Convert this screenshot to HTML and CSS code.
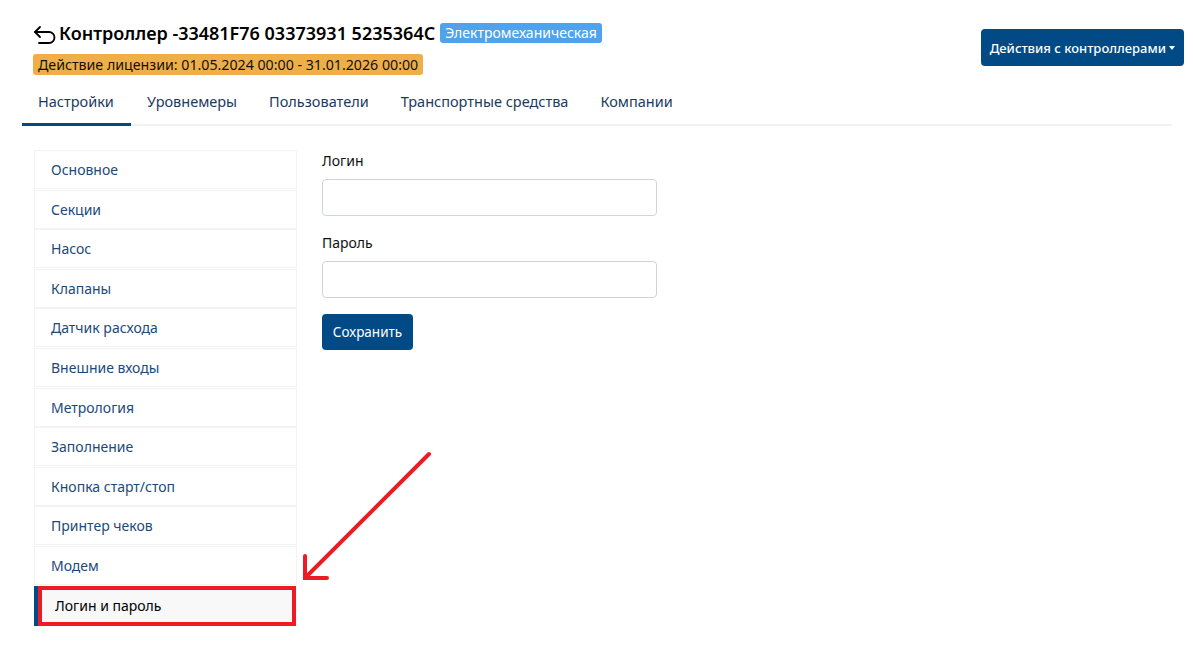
FILE: index.html
```html
<!DOCTYPE html>
<html>
<head>
  <title>Контроллер</title>
  <link rel="stylesheet" href="styles.css">
</head>
<body>
  <div class="page">
    <div class="header">
      <div class="header-info">
        <div class="title-row">
          <svg class="back-icon" width="24" height="20" viewBox="0 0 24 20">
            <path d="M7 3 L2 8 L7 13" fill="none" stroke="#000" stroke-width="1.8" stroke-linecap="round" stroke-linejoin="round"/>
            <path d="M2 8 H16 A5.5 5.5 0 0 1 16 19 H6" fill="none" stroke="#000" stroke-width="1.8" stroke-linecap="round"/>
          </svg>
          <h1 class="title">Контроллер -33481F76 03373931 5235364C</h1>
          <span class="badge-type">Электромеханическая</span>
        </div>
        <span class="badge-license">Действие лицензии: 01.05.2024 00:00 - 31.01.2026 00:00</span>
      </div>
      <button class="actions-btn">Действия с контроллерами <span class="caret"></span></button>
    </div>

    <div class="tabs">
      <div class="tab active">Настройки</div>
      <div class="tab">Уровнемеры</div>
      <div class="tab">Пользователи</div>
      <div class="tab">Транспортные средства</div>
      <div class="tab">Компании</div>
    </div>

    <div class="content">
      <div class="side-menu">
        <div class="menu-item">Основное</div>
        <div class="menu-item">Секции</div>
        <div class="menu-item">Насос</div>
        <div class="menu-item">Клапаны</div>
        <div class="menu-item">Датчик расхода</div>
        <div class="menu-item">Внешние входы</div>
        <div class="menu-item">Метрология</div>
        <div class="menu-item">Заполнение</div>
        <div class="menu-item">Кнопка старт/стоп</div>
        <div class="menu-item">Принтер чеков</div>
        <div class="menu-item">Модем</div>
        <div class="menu-item active">Логин и пароль</div>
      </div>

      <form class="login-form" onsubmit="return false">
        <label class="field-label">Логин</label>
        <input class="field-input" type="text">
        <label class="field-label">Пароль</label>
        <input class="field-input" type="password">
        <button class="save-btn">Сохранить</button>
      </form>
    </div>
  </div>

  <svg class="annotation-arrow" width="140" height="140" viewBox="0 0 140 140">
    <path d="M128 4 L4 128 M4 106 L4 128 L26 128" fill="none" stroke="#ed1c24" stroke-width="4" stroke-linecap="round" stroke-linejoin="miter"/>
  </svg>
</body>
</html>
```

FILE: styles.css
```css
body {
  margin: 0;
  padding: 0;
  font-family: 'Noto Sans', 'Open Sans', sans-serif;
  background-color: #fff;
  color: #000;
}

.page {
  padding: 20px 9px 0 22px;
}

.header {
  display: flex;
  justify-content: space-between;
  align-items: flex-start;
  padding-left: 11px;
}

.header-info {
  display: flex;
  flex-direction: column;
  align-items: flex-start;
}

.title-row {
  display: flex;
  align-items: center;
  height: 26px;
}

.back-icon {
  margin-right: 2px;
  margin-top: 2px;
}

.title {
  margin: 0;
  font-size: 18px;
  font-weight: 600;
}

.badge-type {
  margin-left: 5px;
  background-color: #4ea3ec;
  color: #fff;
  font-size: 14px;
  padding: 0 5px;
  height: 20px;
  line-height: 20px;
  border-radius: 3px;
}

.badge-license {
  margin-top: 8px;
  background-color: #efaf48;
  color: #111;
  font-size: 14.2px;
  height: 21px;
  line-height: 21px;
  padding: 0 5px;
  border-radius: 3px;
}

.actions-btn {
  margin-top: 9px;
  background-color: #014a86;
  color: #fff;
  border: none;
  border-radius: 4px;
  height: 37px;
  width: 203px;
  padding: 0;
  white-space: nowrap;
  font-family: inherit;
  font-size: 13px;
  font-weight: 500;
  cursor: pointer;
}

.caret {
  display: inline-block;
  width: 0;
  height: 0;
  border-left: 3px solid transparent;
  border-right: 3px solid transparent;
  border-top: 4px solid #fff;
  vertical-align: 3px;
}

.tabs {
  display: flex;
  margin-top: 9px;
  margin-right: 12px;
  border-bottom: 2px solid #f2f2f2;
}

.tab {
  padding: 0 16px;
  height: 40px;
  line-height: 34px;
  font-size: 14.5px;
  color: #1b3a5e;
  cursor: pointer;
}

.tab.active {
  border-bottom: 3px solid #014a86;
  margin-bottom: -2px;
  height: 39px;
  padding-right: 17px;
}

.content {
  display: flex;
  gap: 25px;
  padding: 24px 0 0 12px;
}

.side-menu {
  width: 263px;
  display: flex;
  flex-direction: column;
}

.menu-item {
  height: 37px;
  line-height: 37px;
  padding-left: 16px;
  font-size: 14px;
  color: #1c4a78;
  border: 1px solid #f3f3f3;
  margin-bottom: 0.6px;
  cursor: pointer;
}

.menu-item.active {
  background-color: #f8f8f8;
  color: #000;
  border: none;
  border-left: 4px solid #014a86;
  height: 40px;
  line-height: 40px;
  padding-left: 0;
  text-indent: 17px;
  position: relative;
}

.menu-item.active::after {
  content: '';
  position: absolute;
  left: 0;
  top: 0;
  right: 1px;
  bottom: 0;
  border: 4px solid #ed1c24;
}

.login-form {
  display: flex;
  flex-direction: column;
  align-items: flex-start;
  padding-top: 1px;
}

.field-label {
  font-size: 14px;
  color: #111;
  margin-bottom: 9px;
}

.field-input {
  width: 335px;
  height: 37px;
  box-sizing: border-box;
  border: 1px solid #d0d4d8;
  border-radius: 4px;
  margin-bottom: 17px;
}

.save-btn {
  margin-top: -1px;
  background-color: #014a86;
  color: #fff;
  border: none;
  border-radius: 4px;
  height: 36px;
  width: 91px;
  font-family: inherit;
  font-size: 13.5px;
  cursor: pointer;
}

.annotation-arrow {
  position: absolute;
  left: 301px;
  top: 450px;
}
```
